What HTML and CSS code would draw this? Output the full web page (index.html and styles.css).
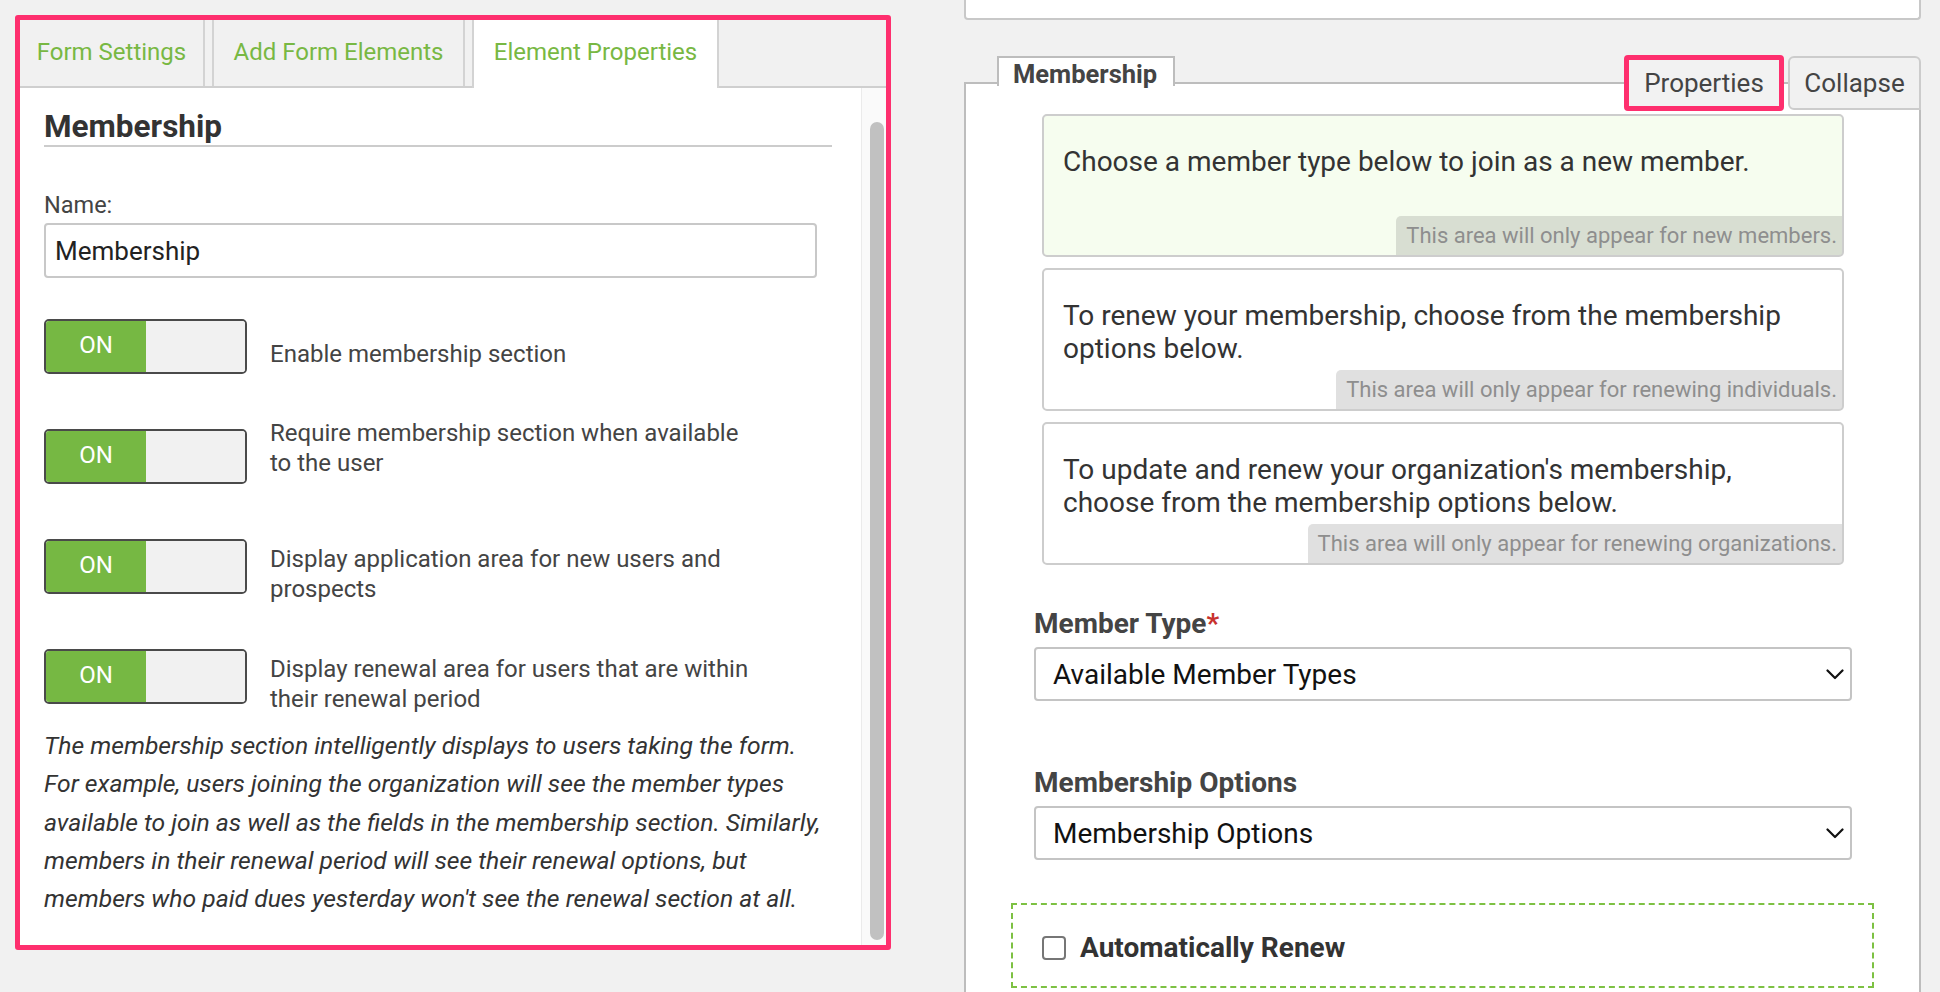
FILE: index.html
```html
<!DOCTYPE html>
<html lang="en">
<head>
<meta charset="utf-8">
<title>Membership – Element Properties</title>
<link rel="stylesheet" href="styles.css">
</head>
<body>
<div class="page">
  <div class="left-panel">
    <div class="tabs">
      <div class="tab tab-first">Form Settings</div>
      <div class="tab tab-second">Add Form Elements</div>
      <div class="tab tab-active">Element Properties</div>
    </div>
    <div class="tab-body">
      <div class="props">
        <h2 class="props-title">Membership</h2>
        <label class="field-label">Name:</label>
        <div class="text-input">Membership</div>

        <div class="toggle-row toggle-row-first">
          <div class="toggle"><span class="toggle-on">ON</span><span class="toggle-off"></span></div>
          <div class="toggle-label">Enable membership section</div>
        </div>
        <div class="toggle-row">
          <div class="toggle"><span class="toggle-on">ON</span><span class="toggle-off"></span></div>
          <div class="toggle-label toggle-label-up">Require membership section when available to the user</div>
        </div>
        <div class="toggle-row">
          <div class="toggle"><span class="toggle-on">ON</span><span class="toggle-off"></span></div>
          <div class="toggle-label">Display application area for new users and prospects</div>
        </div>
        <div class="toggle-row">
          <div class="toggle"><span class="toggle-on">ON</span><span class="toggle-off"></span></div>
          <div class="toggle-label">Display renewal area for users that are within their renewal period</div>
        </div>

        <p class="help">The membership section intelligently displays to users taking the form. For example, users joining the organization will see the member types available to join as well as the fields in the membership section. Similarly, members in their renewal period will see their renewal options, but members who paid dues yesterday won't see the renewal section at all.</p>
      </div>
      <div class="scrollbar"><div class="thumb"></div></div>
    </div>
  </div>

  <div class="right-col">
    <div class="top-card"></div>
    <div class="section">
      <div class="section-head">
        <div class="sec-tab">Membership</div>
        <div class="head-spacer"></div>
        <div class="btn btn-props">Properties</div>
        <div class="btn btn-collapse">Collapse</div>
      </div>
      <div class="section-body">
        <div class="msg msg-green">
          <div class="msg-text">Choose a member type below to join as a new member.</div>
          <div class="msg-note">This area will only appear for new members.</div>
        </div>
        <div class="msg">
          <div class="msg-text">To renew your membership, choose from the membership options below.</div>
          <div class="msg-note">This area will only appear for renewing individuals.</div>
        </div>
        <div class="msg">
          <div class="msg-text">To update and renew your organization's membership, choose from the membership options below.</div>
          <div class="msg-note">This area will only appear for renewing organizations.</div>
        </div>

        <div class="bold-label bold-label-first">Member Type<span class="req">*</span></div>
        <div class="select">
          <span>Available Member Types</span>
          <svg class="chev" width="18" height="11" viewBox="0 0 18 11"><polyline points="1.5,1.5 9,9 16.5,1.5" fill="none" stroke="#111" stroke-width="2.2" stroke-linecap="round" stroke-linejoin="round"/></svg>
        </div>

        <div class="bold-label bold-label-second">Membership Options</div>
        <div class="select">
          <span>Membership Options</span>
          <svg class="chev" width="18" height="11" viewBox="0 0 18 11"><polyline points="1.5,1.5 9,9 16.5,1.5" fill="none" stroke="#111" stroke-width="2.2" stroke-linecap="round" stroke-linejoin="round"/></svg>
        </div>

        <div class="auto-renew">
          <span class="checkbox"></span>
          <span class="auto-label">Automatically Renew</span>
        </div>
      </div>
    </div>
  </div>
</div>
</body>
</html>
```

FILE: styles.css
```css
html, body {
  margin: 0;
  padding: 0;
}
body {
  background: #f1f1f1;
  font-family: Roboto, "Liberation Sans", Arial, sans-serif;
  color: #333;
  width: 1940px;
  height: 992px;
  overflow: hidden;
}
.page {
  display: flex;
  align-items: flex-start;
}

/* ---------- left panel ---------- */
.left-panel {
  margin: 15px 0 0 15px;
  width: 876px;
  height: 935px;
  box-sizing: border-box;
  border: 5px solid #fe2f6e;
  border-radius: 3px;
  background: #f1f1f1;
  display: flex;
  flex-direction: column;
}
.tabs {
  display: flex;
  align-items: flex-start;
  height: 68px;
  box-sizing: border-box;
  border-bottom: 2px solid #cfcfcf;
  flex-shrink: 0;
}
.tab {
  box-sizing: border-box;
  height: 66px;
  display: flex;
  align-items: center;
  justify-content: center;
  padding-bottom: 2px;
  font-size: 24px;
  color: #78b843;
  border-left: 2px solid #d3d3d3;
  border-right: 2px solid #d3d3d3;
  margin-right: 7px;
  background: #f1f1f1;
}
.tab-first {
  width: 185px;
  border-left: 0;
}
.tab-second {
  width: 253px;
}
.tab-active {
  width: 247px;
  height: 68px;
  padding-bottom: 4px;
  margin-bottom: -2px;
  background: #fff;
  position: relative;
}
.tab-body {
  flex: 1;
  display: flex;
  background: #fff;
  min-height: 0;
}
.props {
  flex: 1;
  padding: 0 29px 0 24px;
}
.props-title {
  margin: 0;
  padding-top: 21px;
  font-size: 31.5px;
  line-height: 36px;
  font-weight: 700;
  color: #333;
  border-bottom: 2px solid #cccccc;
}
.field-label {
  display: block;
  margin-top: 45px;
  font-size: 23.5px;
  line-height: 26px;
  color: #444;
}
.text-input {
  margin: 5px 15px 0 0;
  height: 55px;
  box-sizing: border-box;
  border: 2px solid #c8c8c8;
  border-radius: 4px;
  display: flex;
  align-items: center;
  padding-left: 9px;
  font-size: 26px;
  color: #222;
}
.toggle-row {
  display: flex;
  align-items: center;
  height: 55px;
  margin-top: 55px;
}
.toggle-row-first {
  margin-top: 41px;
}
.toggle {
  width: 203px;
  height: 55px;
  box-sizing: border-box;
  border: 2px solid #4a4a4a;
  border-radius: 5px;
  display: flex;
  overflow: hidden;
  flex-shrink: 0;
}
.toggle-on {
  width: 100px;
  background: #76b843;
  color: #fff;
  font-size: 24px;
  display: flex;
  align-items: center;
  justify-content: center;
  padding-bottom: 3px;
  box-sizing: border-box;
}
.toggle-off {
  flex: 1;
  background: #f1f1f1;
}
.toggle-label {
  margin-left: 23px;
  width: 490px;
  font-size: 24px;
  line-height: 30px;
  color: #444;
  padding-top: 14px;
}
.toggle-label-up {
  padding-top: 0;
  padding-bottom: 18px;
}
.help {
  margin: 23px 4px 0 0;
  font-style: italic;
  font-size: 24.7px;
  line-height: 38.3px;
  color: #333;
}
.scrollbar {
  width: 25px;
  box-sizing: border-box;
  border-left: 1px solid #ebebeb;
  background: #fafafa;
  padding: 34px 2px 5px 8px;
  flex-shrink: 0;
}
.thumb {
  width: 14px;
  height: 100%;
  background: #c1c1c1;
  border-radius: 7px;
}

/* ---------- right column ---------- */
.right-col {
  margin-left: 73px;
  width: 957px;
}
.top-card {
  height: 20px;
  box-sizing: border-box;
  border: 2px solid #c8c8c8;
  border-top: 0;
  border-radius: 0 0 4px 4px;
  background: #fff;
}
.section {
  margin-top: 36px;
}
.section-head {
  display: flex;
  align-items: flex-start;
  height: 26px;
  padding-left: 33px;
}
.sec-tab {
  position: relative;
  z-index: 1;
  width: 178px;
  height: 30px;
  box-sizing: border-box;
  border: 2px solid #bdbdbd;
  border-bottom: 0;
  background: #fff;
  font-weight: 700;
  font-size: 25.5px;
  line-height: 28px;
  color: #444;
  padding: 2px 0 0 14px;
  white-space: nowrap;
}
.head-spacer {
  flex: 1;
}
.btn {
  position: relative;
  z-index: 1;
  box-sizing: border-box;
  display: flex;
  align-items: center;
  justify-content: center;
  font-size: 26px;
  color: #444;
  background: #f2f2f2;
}
.btn-props {
  width: 160px;
  height: 56px;
  margin-top: -1px;
  border: 5px solid #fe2f6e;
  border-radius: 4px;
}
.btn-collapse {
  width: 133px;
  height: 54px;
  margin-left: 4px;
  border: 2px solid #cccccc;
  border-radius: 6px 6px 0 6px;
  background: #f1f1f1;
}
.section-body {
  border: 2px solid #bdbdbd;
  background: #fff;
  padding: 30px 45px 40px;
}
.msg {
  margin: 0 30px 11px 31px;
  height: 143px;
  box-sizing: border-box;
  border: 2px solid #cdcdcd;
  border-radius: 5px;
  display: flex;
  flex-direction: column;
  padding: 29px 0 0 19px;
  font-size: 28px;
  line-height: 33px;
  color: #333;
  background: #fff;
}
.msg-green {
  background: #f6fdef;
}
.msg-text {
  padding-right: 40px;
}
.msg-note {
  margin-top: auto;
  align-self: flex-end;
  font-size: 22px;
  line-height: 39px;
  padding: 0 5px 0 10px;
  background: rgba(0, 0, 0, 0.12);
  color: #8e8e8e;
  border-radius: 5px 0 3px 0;
  white-space: nowrap;
}
.bold-label {
  margin: 66px 22px 0 23px;
  font-weight: 700;
  font-size: 28px;
  line-height: 32px;
  color: #444;
}
.bold-label-first {
  margin-top: 43px;
}
.req {
  color: #c8322d;
}
.select {
  height: 54px;
  margin: 7px 22px 0 23px;
  box-sizing: border-box;
  border: 2px solid #c4c4c4;
  border-radius: 4px;
  display: flex;
  align-items: center;
  justify-content: space-between;
  padding: 0 6px 0 17px;
  font-size: 28px;
  color: #111;
}
.chev {
  display: block;
}
.auto-renew {
  margin-top: 43px;
  height: 85px;
  box-sizing: border-box;
  border: 2px dashed #7dc143;
  display: flex;
  align-items: center;
  padding: 4px 0 0 29px;
}
.checkbox {
  width: 24px;
  height: 24px;
  box-sizing: border-box;
  border: 2px solid #767676;
  border-radius: 4px;
  background: #fff;
  margin-right: 14px;
  flex-shrink: 0;
}
.auto-label {
  font-weight: 700;
  font-size: 28px;
  line-height: 32px;
  color: #333;
}
```
